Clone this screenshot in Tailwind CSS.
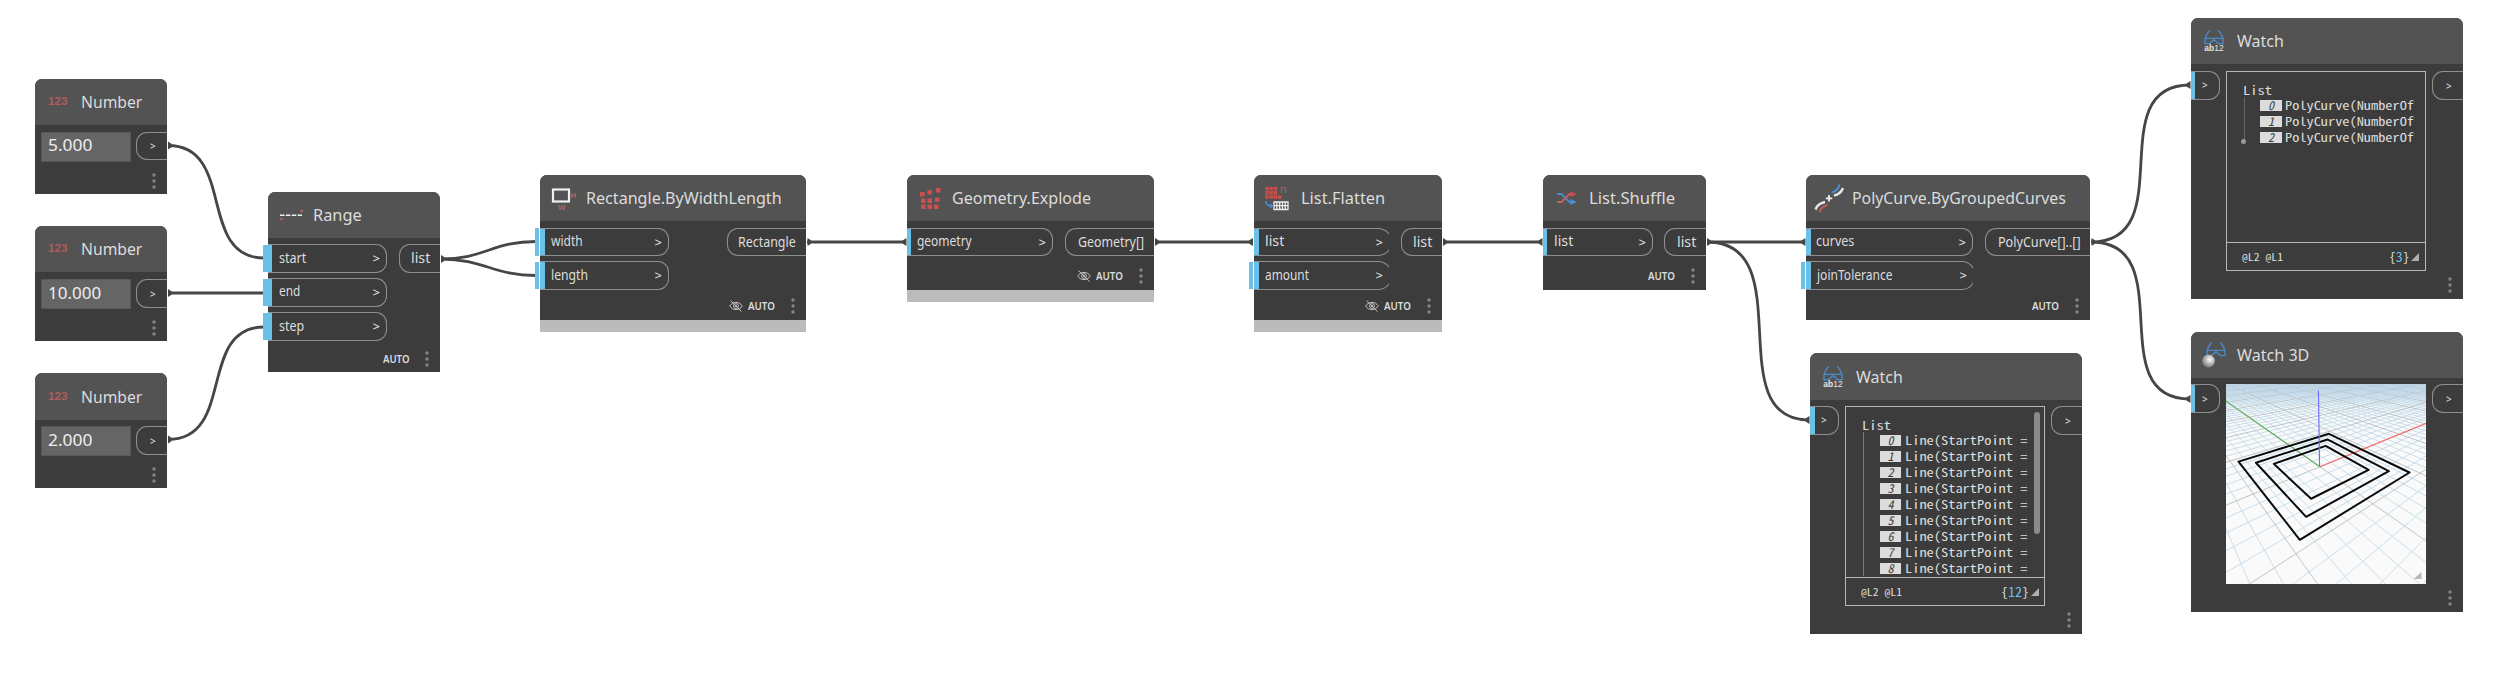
<!DOCTYPE html>
<html lang="en">
<head>
<meta charset="utf-8">
<title>Node graph</title>
<script src="https://cdn.jsdelivr.net/npm/@tailwindcss/browser@4"></script>
</head>
<body class="bg-white">
<svg class="hidden">
  <symbol id="dots" viewBox="0 0 4 16"><g fill="#858585"><circle cx="2" cy="2" r="1.7"/><circle cx="2" cy="8" r="1.7"/><circle cx="2" cy="14" r="1.7"/></g></symbol>
  <symbol id="eye" viewBox="0 0 14 12"><g fill="none" stroke="#c4c4c4" stroke-width="1"><path d="M.7 6C3.5 1.2 10.5 1.2 13.3 6 10.5 10.8 3.5 10.8.7 6z"/><circle cx="7" cy="6" r="2.4"/><circle cx="7" cy="6" r=".7"/><path d="M1.5.6 12.5 11.6"/></g></symbol>
  <symbol id="glasses" viewBox="0 0 20 15"><g fill="none" stroke="#4a8ac6" stroke-width="1.4"><path d="M5.8.8C3.2 1.6 2.6 5 1.2 8.2M14.2.8c2.6.8 3.2 4.2 4.6 7.4"/><path d="M1 8.4h18v5.2h-4.4L10 9.6l-4.6 4H1z"/></g></symbol>
</svg>
<main class="relative w-[2498px] h-[680px] overflow-hidden font-['Noto_Sans',sans-serif] text-[13.5px] leading-none text-[#dcdcdc] whitespace-nowrap">

  <!-- Connectors -->
  <svg class="absolute inset-0" width="2498" height="680" fill="none" stroke="#464646" stroke-width="2.8">
    <path d="M168 145.5C236 145.5 197 258 264 258M168 293H264M168 439.5C236 439.5 197 327 264 327"/>
    <path d="M441 259C484 259 493 241.5 536 241.5M441 259C484 259 493 275.5 536 275.5"/>
    <path d="M807 242H906M1155 242H1253M1443 242H1542M1707 242H1805"/>
    <path d="M1707 242C1802 242 1718 420 1809 420"/>
    <path d="M2091 242C2182 242 2100 85 2190 85M2091 242C2182 242 2100 399 2190 399"/>
    <g fill="#464646" stroke="none">
      <path id="o" d="M168 141.500l3.500 2.200v3.600l-3.500 2.200z"/>
      <use href="#o" y="147.500"/><use href="#o" y="294"/>
      <use href="#o" x="273" y="113.500"/><use href="#o" x="639.500" y="96.500"/><use href="#o" x="987" y="96.500"/><use href="#o" x="1275" y="96.500"/><use href="#o" x="1539" y="96.500"/><use href="#o" x="1923.500" y="96.500"/>
      <path id="i" d="M906.500 238l-4 2.500v3l4 2.500z"/>
      <use href="#i" x="346.500"/><use href="#i" x="636"/><use href="#i" x="899"/><use href="#i" x="903" y="178"/><use href="#i" x="1284" y="-157"/><use href="#i" x="1284" y="157"/>
    </g>
  </svg>

  <!-- Number: 5.000 -->
  <section class="absolute left-[35px] top-[79px] w-[132px] h-[115px] flex flex-col rounded-t-[7px] overflow-hidden bg-[#3c3c3c]">
    <header class="h-[46px] shrink-0 flex items-center bg-[#535353]">
      <div class="w-[46px] pl-[13px] font-['Liberation_Sans',sans-serif] font-bold text-[10px] text-[#b05c5c]"><span data-w="20">123</span></div>
      <h2 class="text-[17px] pb-px"><span data-w="61">Number</span></h2>
    </header>
    <div class="flex justify-between pl-[6px] pt-[7px]">
      <div class="w-[90px] h-[30px] bg-[#656565] border border-[#585858] pl-[6px] pt-[3px] text-[17px] text-[#eee]"><span data-w="44">5.000</span></div>
      <div class="w-[31px] h-[28px] border border-r-0 border-[#8f8f8f] rounded-l-[11px] flex items-center pl-[13px] font-medium text-[10px]">&gt;</div>
    </div>
    <svg class="ml-[117px] mt-[11px] w-[4px] h-[16px]"><use href="#dots"/></svg>
  </section>

  <!-- Number: 10.000 -->
  <section class="absolute left-[35px] top-[226px] w-[132px] h-[115px] flex flex-col rounded-t-[7px] overflow-hidden bg-[#3c3c3c]">
    <header class="h-[46px] shrink-0 flex items-center bg-[#535353]">
      <div class="w-[46px] pl-[13px] font-['Liberation_Sans',sans-serif] font-bold text-[10px] text-[#b05c5c]"><span data-w="20">123</span></div>
      <h2 class="text-[17px] pb-px"><span data-w="61">Number</span></h2>
    </header>
    <div class="flex justify-between pl-[6px] pt-[7px]">
      <div class="w-[90px] h-[30px] bg-[#656565] border border-[#585858] pl-[6px] pt-[4px] text-[17px] text-[#eee]"><span data-w="53">10.000</span></div>
      <div class="w-[31px] h-[29px] border border-r-0 border-[#8f8f8f] rounded-l-[11px] flex items-center pl-[13px] font-medium text-[10px]">&gt;</div>
    </div>
    <svg class="ml-[117px] mt-[11px] w-[4px] h-[16px]"><use href="#dots"/></svg>
  </section>

  <!-- Number: 2.000 -->
  <section class="absolute left-[35px] top-[373px] w-[132px] h-[115px] flex flex-col rounded-t-[7px] overflow-hidden bg-[#3c3c3c]">
    <header class="h-[47px] shrink-0 flex items-center bg-[#535353]">
      <div class="w-[46px] pl-[13px] font-['Liberation_Sans',sans-serif] font-bold text-[10px] text-[#b05c5c]"><span data-w="20">123</span></div>
      <h2 class="text-[17px]"><span data-w="61">Number</span></h2>
    </header>
    <div class="flex justify-between pl-[6px] pt-[6px]">
      <div class="w-[90px] h-[30px] bg-[#656565] border border-[#585858] pl-[6px] pt-[4px] text-[17px] text-[#eee]"><span data-w="44">2.000</span></div>
      <div class="w-[31px] h-[29px] border border-r-0 border-[#8f8f8f] rounded-l-[11px] flex items-center pl-[13px] font-medium text-[10px]">&gt;</div>
    </div>
    <svg class="ml-[117px] mt-[11px] w-[4px] h-[16px]"><use href="#dots"/></svg>
  </section>

  <!-- Range -->
  <section class="absolute left-[268px] top-[192px] w-[172px] h-[180px] flex flex-col rounded-t-[7px] bg-[#3c3c3c]">
    <header class="h-[46px] shrink-0 flex items-center rounded-t-[7px] bg-[#535353]">
      <svg class="ml-[10px] w-[26px] h-[14px]" viewBox="0 0 26 14"><path d="M2 7.300h22" stroke="#eee" stroke-width="1.400" stroke-dasharray="4.500 1.400"/><path d="M1.500 12h4l-2-3zM21.500 2h4.500l-2.200 3z" fill="#b85c5c"/></svg>
      <h2 class="text-[17px] pb-px ml-[9px]"><span data-w="49">Range</span></h2>
    </header>
    <div class="flex justify-between items-start pt-[6px]">
      <div class="flex flex-col gap-[5px]">
        <div class="relative w-[119px] h-[29px] border border-l-0 border-[#8f8f8f] rounded-r-[11px] flex items-center justify-between pl-[11px] pr-[6px]"><i class="absolute -left-[5px] top-0 w-[9px] h-[27px] bg-[#6ac0e7]"></i><span data-w="27">start</span><b class="font-medium text-[13px]">&gt;</b></div>
        <div class="relative w-[119px] h-[29px] border border-l-0 border-[#8f8f8f] rounded-r-[11px] flex items-center justify-between pl-[11px] pr-[6px]"><i class="absolute -left-[5px] top-0 w-[9px] h-[27px] bg-[#6ac0e7]"></i><span class="pb-px" data-w="21">end</span><b class="font-medium text-[13px]">&gt;</b></div>
        <div class="relative w-[119px] h-[29px] border border-l-0 border-[#8f8f8f] rounded-r-[11px] flex items-center justify-between pl-[11px] pr-[6px]"><i class="absolute -left-[5px] top-0 w-[9px] h-[27px] bg-[#6ac0e7]"></i><span data-w="25">step</span><b class="font-medium text-[13px]">&gt;</b></div>
      </div>
      <div class="w-[41px] h-[29px] border border-r-0 border-[#8f8f8f] rounded-l-[11px] flex items-center justify-end pr-[10px]"><span data-w="19">list</span></div>
    </div>
    <footer class="flex items-center justify-end gap-[16px] pr-[11px] mt-[10px]"><span class="text-[10.500px] font-semibold" data-w="26.500">AUTO</span><svg class="w-[4px] h-[16px]"><use href="#dots"/></svg></footer>
  </section>

  <!-- Rectangle.ByWidthLength -->
  <section class="absolute left-[540px] top-[175px] w-[266px] h-[157px] flex flex-col rounded-t-[7px] bg-[#3c3c3c]">
    <header class="h-[46px] shrink-0 flex items-center rounded-t-[7px] bg-[#535353]">
      <svg class="ml-[10px] w-[28px] h-[26px]" viewBox="0 0 28 26"><rect x="3" y="4.500" width="16" height="12" fill="none" stroke="#f0f0f0" stroke-width="2.200"/><text x="20.500" y="13" class="font-['Liberation_Sans',sans-serif] font-bold text-[8px]" fill="#b06464">H</text><text x="8" y="25" class="font-['Liberation_Sans',sans-serif] font-bold text-[8px]" fill="#b06464">W</text></svg>
      <h2 class="text-[17px] pb-px ml-[8px]"><span data-w="196">Rectangle.ByWidthLength</span></h2>
    </header>
    <div class="flex justify-between items-start pt-[7px]">
      <div class="flex flex-col gap-[5px]">
        <div class="relative w-[129px] h-[28px] border border-l-0 border-[#8f8f8f] rounded-r-[11px] flex items-center justify-between pl-[11px] pr-[6px]"><i class="absolute -left-[5px] -top-px w-[4px] h-[28px] bg-[#6ac0e7]"></i><i class="absolute left-0 top-0 w-[5px] h-[26px] bg-[#6ac0e7]"></i><span data-w="32">width</span><b class="font-medium text-[13px]">&gt;</b></div>
        <div class="relative w-[129px] h-[29px] border border-l-0 border-[#8f8f8f] rounded-r-[11px] flex items-center justify-between pl-[11px] pr-[6px]"><i class="absolute -left-[5px] top-0 w-[4px] h-[27px] bg-[#6ac0e7]"></i><i class="absolute left-0 top-0 w-[5px] h-[27px] bg-[#6ac0e7]"></i><span data-w="37">length</span><b class="font-medium text-[13px]">&gt;</b></div>
      </div>
      <div class="w-[79px] h-[28px] border border-r-0 border-[#8f8f8f] rounded-l-[11px] flex items-center justify-end pt-px pr-[10px]"><span data-w="58">Rectangle</span></div>
    </div>
    <footer class="flex items-center justify-end pr-[11px] mt-[8px]"><svg class="w-[14px] h-[12px] mr-[5px]"><use href="#eye"/></svg><span class="text-[10.500px] font-semibold" data-w="27">AUTO</span><svg class="ml-[16px] w-[4px] h-[16px]"><use href="#dots"/></svg></footer>
    <div class="mt-auto h-[12px] bg-[#bbb]"></div>
  </section>

  <!-- Geometry.Explode -->
  <section class="absolute left-[907px] top-[175px] w-[247px] h-[127px] flex flex-col rounded-t-[7px] bg-[#3c3c3c]">
    <header class="h-[46px] shrink-0 flex items-center rounded-t-[7px] bg-[#535353]">
      <svg class="ml-[12px] w-[24px] h-[24px]" viewBox="0 0 24 24" fill="#c9504c"><path d="M1 6h4.500v4.500H1zM8.500 4H13v4.500H8.500zM17 2h4.500v4.500H17zM2 12.500h4.500V17H2zM8.500 12.500H13V17H8.500zM16 11.500h4.500V16H16zM2 18.500h4.500V23H2zM8.500 18.500H13V23H8.500zM15 18.500h4.500V23H15z"/></svg>
      <h2 class="text-[17px] pb-px ml-[9px]"><span data-w="139">Geometry.Explode</span></h2>
    </header>
    <div class="flex justify-between items-start pt-[7px]">
      <div class="relative w-[146px] h-[28px] border border-l-0 border-[#8f8f8f] rounded-r-[11px] flex items-center justify-between pl-[10px] pr-[6px]"><i class="absolute left-0 top-0 w-[4px] h-[26px] bg-[#6ac0e7]"></i><span data-w="55">geometry</span><b class="font-medium text-[13px]">&gt;</b></div>
      <div class="w-[89px] h-[28px] border border-r-0 border-[#8f8f8f] rounded-l-[11px] flex items-center justify-end pt-px pr-[10px]"><span data-w="66">Geometry[]</span></div>
    </div>
    <footer class="flex items-center justify-end pr-[11px] mt-[12px]"><svg class="w-[14px] h-[12px] mr-[5px]"><use href="#eye"/></svg><span class="text-[10.500px] font-semibold" data-w="27">AUTO</span><svg class="ml-[16px] w-[4px] h-[16px]"><use href="#dots"/></svg></footer>
    <div class="mt-auto h-[12px] bg-[#bbb]"></div>
  </section>

  <!-- List.Flatten -->
  <section class="absolute left-[1254px] top-[175px] w-[188px] h-[157px] flex flex-col rounded-t-[7px] bg-[#3c3c3c]">
    <header class="h-[46px] shrink-0 flex items-center rounded-t-[7px] bg-[#535353]">
      <svg class="ml-[10px] w-[26px] h-[26px]" viewBox="0 0 26 26" fill="none"><path d="M2 2.500h2v2H2zM6.200 2.500h2v2h-2zM10.400 2.500h2v2h-2zM2 6.700h2v2H2zM6.200 6.700h2v2h-2zM10.400 6.700h2v2h-2zM2 10.900h2v2H2zM6.200 10.900h2v2h-2zM10.400 10.900h2v2h-2zM14.600 10.900h2v2h-2z" stroke="#c9504c" stroke-width="1.500"/><path d="M17.500 8V2.500h2.800q1.200 0 1.200 1.200V8" stroke="#a85c5c" stroke-width="1.200"/><path d="M1.500 16q1 5 6 5" stroke="#4a8ac6" stroke-width="1.500"/><path d="M6 18.300l3.500 2.700L6 23.500z" fill="#4a8ac6"/><path d="M10 17h14v7.500H10zM12.800 17v7.500M15.600 17v7.500M18.400 17v7.500M21.200 17v7.500M10 20.700h14" stroke="#eee" stroke-width="1.300"/></svg>
      <h2 class="text-[17px] pb-px ml-[11px]"><span data-w="84">List.Flatten</span></h2>
    </header>
    <div class="flex justify-between items-start pt-[7px]">
      <div class="flex flex-col gap-[5px]">
        <div class="relative w-[135px] h-[28px] overflow-hidden"><div class="w-[138px] h-[28px] border border-l-0 border-[#8f8f8f] rounded-r-[14px] flex items-center justify-between pl-[11px] pr-[8px]"><i class="absolute left-0 top-px w-[5px] h-[26px] bg-[#6ac0e7]"></i><span data-w="19">list</span><b class="font-medium text-[13px]">&gt;</b></div></div>
        <div class="relative w-[135px] h-[29px]"><i class="absolute -left-[5px] top-px w-[4px] h-[27px] bg-[#6ac0e7]"></i><i class="absolute left-0 top-px w-[5px] h-[27px] bg-[#6ac0e7]"></i><div class="overflow-hidden"><div class="w-[138px] h-[29px] border border-l-0 border-[#8f8f8f] rounded-r-[14px] flex items-center justify-between pl-[11px] pr-[8px]"><span data-w="44">amount</span><b class="font-medium text-[13px]">&gt;</b></div></div></div>
      </div>
      <div class="w-[41px] h-[28px] border border-r-0 border-[#8f8f8f] rounded-l-[11px] flex items-center justify-end pt-px pr-[10px]"><span data-w="19">list</span></div>
    </div>
    <footer class="flex items-center justify-end pr-[11px] mt-[8px]"><svg class="w-[14px] h-[12px] mr-[5px]"><use href="#eye"/></svg><span class="text-[10.500px] font-semibold" data-w="27">AUTO</span><svg class="ml-[16px] w-[4px] h-[16px]"><use href="#dots"/></svg></footer>
    <div class="mt-auto h-[12px] bg-[#bbb]"></div>
  </section>

  <!-- List.Shuffle -->
  <section class="absolute left-[1543px] top-[175px] w-[163px] h-[115px] flex flex-col rounded-t-[7px] bg-[#3c3c3c]">
    <header class="h-[46px] shrink-0 flex items-center rounded-t-[7px] bg-[#535353]">
      <svg class="ml-[13px] w-[22px] h-[16px]" viewBox="0 0 22 16" fill="none" stroke-width="1.800"><path d="M1 4h4.500l8 8H16" stroke="#4a8ac6"/><path d="M1 12h4.500l8-8H16" stroke="#c06060"/><path d="M14.500 1l6 3.200-6 3z" fill="#d04c48"/><path d="M14.500 9l6 3-6 3z" fill="#4a90d4"/></svg>
      <h2 class="text-[17px] pb-px ml-[11px]"><span data-w="86">List.Shuffle</span></h2>
    </header>
    <div class="flex justify-between items-start pt-[7px]">
      <div class="relative w-[110px] h-[28px] border border-l-0 border-[#8f8f8f] rounded-r-[11px] flex items-center justify-between pl-[11px] pr-[6px]"><i class="absolute left-0 top-0 w-[4px] h-[26px] bg-[#6ac0e7]"></i><span data-w="19">list</span><b class="font-medium text-[13px]">&gt;</b></div>
      <div class="w-[42px] h-[28px] border border-r-0 border-[#8f8f8f] rounded-l-[11px] flex items-center justify-end pt-px pr-[10px]"><span data-w="19">list</span></div>
    </div>
    <footer class="flex items-center justify-end pr-[11px] mt-[12px]"><span class="text-[10.500px] font-semibold" data-w="27">AUTO</span><svg class="ml-[16px] w-[4px] h-[16px]"><use href="#dots"/></svg></footer>
  </section>

  <!-- PolyCurve.ByGroupedCurves -->
  <section class="absolute left-[1806px] top-[175px] w-[284px] h-[145px] flex flex-col rounded-t-[7px] bg-[#3c3c3c]">
    <header class="h-[46px] shrink-0 flex items-center rounded-t-[7px] bg-[#535353]">
      <svg class="ml-[8px] w-[30px] h-[30px]" viewBox="0 0 30 30" fill="none" stroke-width="2.400"><path d="M1.500 26.500Q3.500 20.500 11 19" stroke="#e8e8e8"/><path d="M5.500 29Q7 23.500 14 22" stroke="#b85c5c" stroke-width="2.200"/><path d="M17.500 9.500Q24 8 25.500 1.500" stroke="#4a8ac6" stroke-width="2.200"/><path d="M20 12.500Q26.500 11.500 29 5" stroke="#e8e8e8"/><path d="M15 12v6.500M11.800 15.300h6.500" stroke="#eee" stroke-width="1.800"/></svg>
      <h2 class="text-[17px] pb-px ml-[8px]"><span data-w="213.500">PolyCurve.ByGroupedCurves</span></h2>
    </header>
    <div class="flex justify-between items-start pt-[7px]">
      <div class="flex flex-col gap-[5px]">
        <div class="relative w-[167px] h-[28px] border border-l-0 border-[#8f8f8f] rounded-r-[11px] flex items-center justify-between pl-[10px] pr-[6px]"><i class="absolute left-0 top-0 w-[5px] h-[26px] bg-[#6ac0e7]"></i><span data-w="38">curves</span><b class="font-medium text-[13px]">&gt;</b></div>
        <div class="relative w-[167px] h-[29px]"><i class="absolute -left-[5px] top-px w-[4px] h-[27px] bg-[#6ac0e7]"></i><i class="absolute left-0 top-px w-[5px] h-[27px] bg-[#6ac0e7]"></i><div class="overflow-hidden"><div class="w-[169px] h-[29px] border border-l-0 border-[#8f8f8f] rounded-r-[13px] flex items-center justify-between pl-[11px] pr-[7px]"><span data-w="76">joinTolerance</span><b class="font-medium text-[13px]">&gt;</b></div></div></div>
      </div>
      <div class="w-[105px] h-[28px] border border-r-0 border-[#8f8f8f] rounded-l-[11px] flex items-center justify-end pt-px pr-[9px]"><span data-w="83">PolyCurve[]..[]</span></div>
    </div>
    <footer class="flex items-center justify-end pr-[11px] mt-[8px]"><span class="text-[10.500px] font-semibold" data-w="27">AUTO</span><svg class="ml-[16px] w-[4px] h-[16px]"><use href="#dots"/></svg></footer>
  </section>

  <!-- Watch: lines -->
  <section class="absolute left-[1810px] top-[353px] w-[272px] h-[281px] flex flex-col rounded-t-[7px] bg-[#3c3c3c]">
    <header class="h-[47px] shrink-0 flex items-center rounded-t-[7px] bg-[#535353]">
      <div class="ml-[12px] w-[22px] h-[24px] pt-px flex flex-col items-center"><svg class="w-[20px] h-[15px] shrink-0"><use href="#glasses"/></svg><span class="font-['Liberation_Sans',sans-serif] text-[8.500px] leading-[7px] text-[#e4e4e4]"><b>ab</b>12</span></div>
      <h2 class="text-[17px] ml-[12px]"><span data-w="47">Watch</span></h2>
    </header>
    <div class="flex justify-between items-start pt-[6px]">
      <div class="relative w-[29px] h-[29px] border border-l-0 border-[#8f8f8f] rounded-r-[11px] flex items-center pl-[11px] pb-[2px] font-medium text-[10px]"><i class="absolute left-0 top-0 w-[5px] h-[27px] bg-[#6ac0e7]"></i>&gt;</div>
      <div class="relative w-[200px] h-[200px] ml-[6px] border border-[#b8b8b8] font-['Noto_Sans_Mono_CJK_SC','DejaVu_Sans_Mono',monospace] text-[12px] flex flex-col">
        <div class="h-[171px] border-b border-[#b8b8b8] overflow-hidden pt-[10px] pl-[16px]">
          <div class="h-[15px] leading-[16px]"><span data-w="29">List</span></div>
          <div class="border-l border-[#777] ml-px pl-[16px]">
            <div class="h-[16px] flex items-center gap-[4px]"><i class="w-[21px] h-[11px] bg-[#dcdcdc] text-[#3c3c3c] leading-[10px] text-center">0</i><span data-w="122.400">Line(StartPoint =</span></div>
            <div class="h-[16px] flex items-center gap-[4px]"><i class="w-[21px] h-[11px] bg-[#dcdcdc] text-[#3c3c3c] leading-[10px] text-center">1</i><span data-w="122.400">Line(StartPoint =</span></div>
            <div class="h-[16px] flex items-center gap-[4px]"><i class="w-[21px] h-[11px] bg-[#dcdcdc] text-[#3c3c3c] leading-[10px] text-center">2</i><span data-w="122.400">Line(StartPoint =</span></div>
            <div class="h-[16px] flex items-center gap-[4px]"><i class="w-[21px] h-[11px] bg-[#dcdcdc] text-[#3c3c3c] leading-[10px] text-center">3</i><span data-w="122.400">Line(StartPoint =</span></div>
            <div class="h-[16px] flex items-center gap-[4px]"><i class="w-[21px] h-[11px] bg-[#dcdcdc] text-[#3c3c3c] leading-[10px] text-center">4</i><span data-w="122.400">Line(StartPoint =</span></div>
            <div class="h-[16px] flex items-center gap-[4px]"><i class="w-[21px] h-[11px] bg-[#dcdcdc] text-[#3c3c3c] leading-[10px] text-center">5</i><span data-w="122.400">Line(StartPoint =</span></div>
            <div class="h-[16px] flex items-center gap-[4px]"><i class="w-[21px] h-[11px] bg-[#dcdcdc] text-[#3c3c3c] leading-[10px] text-center">6</i><span data-w="122.400">Line(StartPoint =</span></div>
            <div class="h-[16px] flex items-center gap-[4px]"><i class="w-[21px] h-[11px] bg-[#dcdcdc] text-[#3c3c3c] leading-[10px] text-center">7</i><span data-w="122.400">Line(StartPoint =</span></div>
            <div class="h-[16px] flex items-center gap-[4px]"><i class="w-[21px] h-[11px] bg-[#dcdcdc] text-[#3c3c3c] leading-[10px] text-center">8</i><span data-w="122.400">Line(StartPoint =</span></div>
          </div>
        </div>
        <i class="absolute right-[4px] top-[5px] w-[6px] h-[122px] rounded-full bg-[#8a8a8a]"></i>
        <div class="flex-1 flex items-center justify-between pl-[15px] pr-[5px]"><span class="text-[10px]" data-w="41">@L2 @L1</span><div class="flex items-center gap-[2px] text-[13px]"><span data-w="28">{<span class="text-[#6ac0e7]">12</span>}</span><svg class="w-[8px] h-[8px]"><path d="M8 0v8H0z" fill="#b0b0b0"/></svg></div></div>
      </div>
      <div class="w-[31px] h-[29px] ml-auto border border-r-0 border-[#8f8f8f] rounded-l-[11px] flex items-center pl-[13px] font-medium text-[10px]">&gt;</div>
    </div>
    <svg class="ml-[257px] mt-[6px] w-[4px] h-[16px]"><use href="#dots"/></svg>
  </section>

  <!-- Watch: polycurves -->
  <section class="absolute left-[2191px] top-[18px] w-[272px] h-[281px] flex flex-col rounded-t-[7px] bg-[#3c3c3c]">
    <header class="h-[46px] shrink-0 flex items-center rounded-t-[7px] bg-[#535353]">
      <div class="ml-[12px] w-[22px] h-[24px] pt-px flex flex-col items-center"><svg class="w-[20px] h-[15px] shrink-0"><use href="#glasses"/></svg><span class="font-['Liberation_Sans',sans-serif] text-[8.500px] leading-[7px] text-[#e4e4e4]"><b>ab</b>12</span></div>
      <h2 class="text-[17px] pb-px ml-[12px]"><span data-w="47">Watch</span></h2>
    </header>
    <div class="flex justify-between items-start pt-[7px]">
      <div class="relative w-[29px] h-[29px] border border-l-0 border-[#8f8f8f] rounded-r-[11px] flex items-center pl-[11px] pb-[2px] font-medium text-[10px]"><i class="absolute left-0 top-0 w-[4px] h-[27px] bg-[#6ac0e7]"></i>&gt;</div>
      <div class="w-[200px] h-[200px] ml-[6px] border border-[#b8b8b8] font-['Noto_Sans_Mono_CJK_SC','DejaVu_Sans_Mono',monospace] text-[12px] flex flex-col">
        <div class="h-[171px] border-b border-[#b8b8b8] overflow-hidden pt-[10px] pl-[16px]">
          <div class="h-[15px] leading-[16px]"><span data-w="29">List</span></div>
          <div class="relative border-l border-[#666] ml-px pl-[15px] w-[170px] h-[45px]">
            <div class="h-[16px] flex items-center gap-[3px]"><i class="w-[22px] h-[11px] shrink-0 bg-[#dcdcdc] text-[#3c3c3c] leading-[10px] text-center">0</i><span data-w="129">PolyCurve(NumberOf</span></div>
            <div class="h-[16px] flex items-center gap-[3px]"><i class="w-[22px] h-[11px] shrink-0 bg-[#dcdcdc] text-[#3c3c3c] leading-[10px] text-center">1</i><span data-w="129">PolyCurve(NumberOf</span></div>
            <div class="h-[16px] flex items-center gap-[3px]"><i class="w-[22px] h-[11px] shrink-0 bg-[#dcdcdc] text-[#3c3c3c] leading-[10px] text-center">2</i><span data-w="129">PolyCurve(NumberOf</span></div>
            <i class="absolute -left-[4px] -bottom-[2px] size-[5px] rounded-full bg-[#9a9a9a]"></i>
          </div>
        </div>
        <div class="flex-1 flex items-center justify-between pl-[15px] pr-[6px]"><span class="text-[10px]" data-w="41">@L2 @L1</span><div class="flex items-center gap-[2px] text-[13px]"><span data-w="21">{<span class="text-[#6ac0e7]">3</span>}</span><svg class="w-[8px] h-[8px]"><path d="M8 0v8H0z" fill="#b0b0b0"/></svg></div></div>
      </div>
      <div class="w-[31px] h-[29px] ml-auto border border-r-0 border-[#8f8f8f] rounded-l-[11px] flex items-center pl-[13px] font-medium text-[10px]">&gt;</div>
    </div>
    <svg class="ml-[257px] mt-[6px] w-[4px] h-[16px]"><use href="#dots"/></svg>
  </section>

  <!-- Watch 3D -->
  <section class="absolute left-[2191px] top-[332px] w-[272px] h-[280px] flex flex-col rounded-t-[7px] bg-[#3c3c3c]">
    <header class="h-[46px] shrink-0 flex items-center rounded-t-[7px] bg-[#535353]">
      <svg class="ml-[10px] w-[26px] h-[28px]" viewBox="0 0 26 28"><defs><radialGradient id="ball" cx=".6" cy=".38" r=".62"><stop offset="0" stop-color="#fff"/><stop offset=".3" stop-color="#d8d8d8"/><stop offset="1" stop-color="#7c7c7c"/></radialGradient></defs><use href="#glasses" x="5" y="1" width="20" height="15"/><circle cx="7.500" cy="20" r="6.400" fill="url(#ball)"/></svg>
      <h2 class="text-[17px] pb-px ml-[10px]"><span data-w="72">Watch 3D</span></h2>
    </header>
    <div class="flex items-start pt-[6px]">
      <div class="relative w-[29px] h-[29px] border border-l-0 border-[#8f8f8f] rounded-r-[11px] flex items-center pl-[11px] font-medium text-[10px]"><i class="absolute left-0 top-0 w-[4px] h-[27px] bg-[#6ac0e7]"></i>&gt;</div>
      <svg id="view" class="w-[200px] h-[200px] ml-[6px] bg-[#fafafa] overflow-hidden" viewBox="0 0 200 200" fill="none">
        <defs><linearGradient id="haze" x2="0" y2="1"><stop stop-color="#b9d3e4" stop-opacity=".75"/><stop offset="1" stop-color="#b9d3e4" stop-opacity="0"/></linearGradient></defs>
        <path id="minor" stroke="#c9deeb" stroke-width="1"/>
        <path id="major" stroke="#b4bfc6" stroke-width=".9"/>
        <rect width="200" height="22" fill="url(#haze)"/>
        <path id="axisX" stroke="#f66" stroke-width="1.100"/>
        <path id="axisY" stroke="#5cb05c" stroke-width="1.100"/>
        <path id="curves" stroke="#0a0a0a" stroke-width="2" stroke-linejoin="round"/>
        <path d="M93.600 82.300 92.400 6.500" stroke="#6a6aff" stroke-width="1.100"/>
        <path d="M195.500 188v7h-8z" fill="#b4b4b4"/>
      </svg>
      <div class="w-[31px] h-[29px] ml-auto border border-r-0 border-[#8f8f8f] rounded-l-[11px] flex items-center pl-[13px] font-medium text-[10px]">&gt;</div>
    </div>
    <svg class="ml-[257px] mt-[6px] w-[4px] h-[16px]"><use href="#dots"/></svg>
  </section>
</main>
<script>
// Squeeze each label to its design width, again whenever its natural width changes.
const fit = el => {
  const natural = el.offsetWidth, target = +el.dataset.w;
  if (!natural) return;
  el.style.transform = `scaleX(${target / natural})`;
  el.style.marginRight = `${target - natural}px`;
};
const observer = new ResizeObserver(entries => entries.forEach(e => fit(e.target)));
document.querySelectorAll('[data-w]').forEach(el => {
  el.style.display = 'inline-block';
  el.style.flexShrink = '0';
  el.style.transformOrigin = '0 50%';
  observer.observe(el);
});
addEventListener('load', () => document.querySelectorAll('[data-w]').forEach(fit));

// Perspective of the ground plane, solved from the outer square (side 9).
const src = [[-4.5, 4.5], [4.5, 4.5], [4.5, -4.5], [-4.5, -4.5]];
const dst = [[12.5, 77.6], [103, 49.8], [183.5, 88.5], [73.8, 155.8]];
const m = [];
src.forEach(([x, y], k) => {
  const [u, v] = dst[k];
  m.push([x, y, 1, 0, 0, 0, -u * x, -u * y, u], [0, 0, 0, x, y, 1, -v * x, -v * y, v]);
});
for (let c = 0; c < 8; c++) {
  let p = c;
  for (let r = c; r < 8; r++) if (Math.abs(m[r][c]) > Math.abs(m[p][c])) p = r;
  [m[c], m[p]] = [m[p], m[c]];
  for (let r = 0; r < 8; r++) if (r !== c) {
    const f = m[r][c] / m[c][c];
    for (let j = c; j < 9; j++) m[r][j] -= f * m[c][j];
  }
}
const h = m.map((row, k) => row[8] / row[k]);
const depth = (x, y) => h[6] * x + h[7] * y + 1;
const project = (x, y) => {
  const w = depth(x, y);
  return ((h[0] * x + h[1] * y + h[2]) / w).toFixed(2) + ' ' + ((h[3] * x + h[4] * y + h[5]) / w).toFixed(2);
};
function segment(x1, y1, x2, y2) {
  const near = 0.05, a = depth(x1, y1), b = depth(x2, y2);
  if (a < near && b < near) return '';
  if (a < near) { const t = (near - a) / (b - a); x1 += (x2 - x1) * t; y1 += (y2 - y1) * t; }
  if (b < near) { const t = (near - b) / (a - b); x2 += (x1 - x2) * t; y2 += (y1 - y2) * t; }
  return `M${project(x1, y1)}L${project(x2, y2)}`;
}
const draw = (id, d) => document.getElementById(id).setAttribute('d', d);
let minor = '', major = '';
for (let i = -100; i <= 100; i++) {
  const d = segment(i, -100, i, 100) + segment(-100, i, 100, i);
  if (i % 5) minor += d; else major += d;
}
draw('minor', minor);
draw('major', major);
draw('axisX', segment(0, 0, 100, 0));
draw('axisY', segment(0, 0, 0, 100));
draw('curves', [5, 7, 9].map(s => 'M' + [[-1, 1], [1, 1], [1, -1], [-1, -1]].map(([a, b]) => project(a * s / 2, b * s / 2)).join('L') + 'Z').join(''));
</script>
</body>
</html>
